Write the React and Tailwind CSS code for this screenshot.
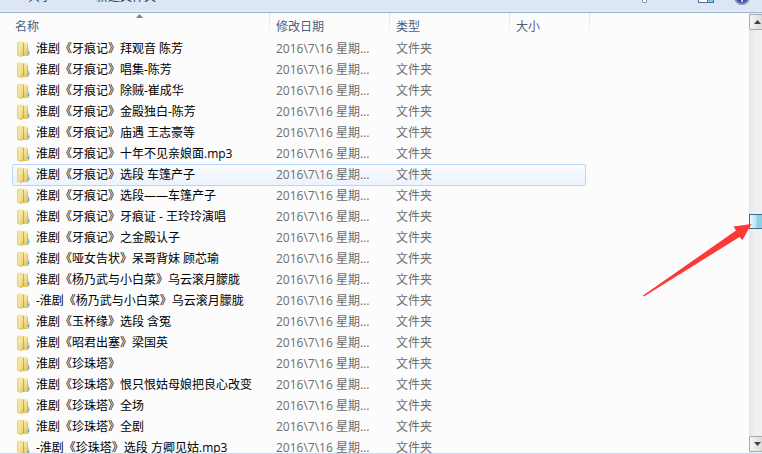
import React from 'react';

const files = [
  '淮剧《牙痕记》拜观音 陈芳',
  '淮剧《牙痕记》唱集-陈芳',
  '淮剧《牙痕记》除贼-崔成华',
  '淮剧《牙痕记》金殿独白-陈芳',
  '淮剧《牙痕记》庙遇 王志豪等',
  '淮剧《牙痕记》十年不见亲娘面.mp3',
  '淮剧《牙痕记》选段 车篷产子',
  '淮剧《牙痕记》选段——车篷产子',
  '淮剧《牙痕记》牙痕证 - 王玲玲演唱',
  '淮剧《牙痕记》之金殿认子',
  '淮剧《哑女告状》呆哥背妹 顾芯瑜',
  '淮剧《杨乃武与小白菜》乌云滚月朦胧',
  '-淮剧《杨乃武与小白菜》乌云滚月朦胧',
  '淮剧《玉杯缘》选段 含冤',
  '淮剧《昭君出塞》梁国英',
  '淮剧《珍珠塔》',
  '淮剧《珍珠塔》恨只恨姑母娘把良心改变',
  '淮剧《珍珠塔》全场',
  '淮剧《珍珠塔》全剧',
  '-淮剧《珍珠塔》选段 方卿见姑.mp3',
];

const columns = ['名称', '修改日期', '类型', '大小'];
const scrollPos = 0.453;

function FolderIcon() {
  return (
    <svg className="h-4 w-4 shrink-0" viewBox="0 0 16 16" aria-hidden="true">
      <defs>
        <linearGradient id="folderFront" x1="0" x2="1" y1="0" y2="1">
          <stop offset="0" stopColor="#f6eaa8" />
          <stop offset="0.6" stopColor="#f3e193" />
          <stop offset="1" stopColor="#dfc055" />
        </linearGradient>
        <linearGradient id="folderBack" x1="0" x2="0" y1="0" y2="1">
          <stop offset="0" stopColor="#f7ecb4" />
          <stop offset="1" stopColor="#e3c660" />
        </linearGradient>
      </defs>
      <path d="M6 1h6l1 1v5l1 1v6l-1 1H6z" fill="url(#folderBack)" />
      <path d="M12.500 3v11.500" stroke="#d9bf62" />
      <path d="M13 9.500h1.500v4H13z" fill="#9ad0ee" />
      <path d="M13 11h1v2h-1z" fill="#4a9fd6" />
      <path d="M6.500 1 9 2v12.500L6.500 15.500z" fill="#cfae48" />
      <path d="M2 1.500 3 0.500h3.500L8 2v12l-1.500 2L2 14.500z" fill="url(#folderFront)" />
      <path d="M2.500 1.500v13l4 1" fill="none" stroke="#e0c668" strokeWidth="0.700" />
    </svg>
  );
}

function ScrollButton({ label, down }) {
  return (
    <button aria-label={label} className="flex h-4 w-[17px] shrink-0 items-center justify-center rounded-xs border border-[#a9a9a9] bg-linear-to-r from-[#f6f6f6] to-[#d4d4d4]">
      <svg className="h-1 w-[7px]" viewBox="0 0 7 4" aria-hidden="true">
        <path d={down ? 'M0 0h7L3.500 4z' : 'M0 4h7L3.500 0z'} fill="#404040" />
      </svg>
    </button>
  );
}

function Toolbar() {
  return (
    <header className="flex h-[13px] shrink-0 items-end overflow-hidden border-b border-[#9fb0cd] bg-linear-to-b from-[#dce6f4] from-80% to-[#e6eef9]">
      <div className="flex h-[30px] w-full items-center pr-3 pl-7 text-[#1e395b]">
        <button>共享</button>
        <button className="ml-11">新建文件夹</button>
        <div className="ml-auto flex items-center">
          <button aria-label="更改视图" className="mr-[51px]">
            <svg className="h-3 w-[5px]" viewBox="0 0 5 12" aria-hidden="true">
              <rect x="0.500" y="7" width="4" height="4.500" rx="1" fill="#fff" stroke="#7a8594" />
            </svg>
          </button>
          <button aria-label="预览窗格" className="mr-5">
            <svg className="h-3 w-4" viewBox="0 0 16 12" aria-hidden="true">
              <rect x="0.500" y="0.500" width="15" height="11" fill="#fff" stroke="#4f6f9c" />
              <path d="M10 1h5v10h-5z" fill="#7cc8e4" />
              <path d="M9.500 1v10" stroke="#4f6f9c" />
            </svg>
          </button>
          <button aria-label="帮助">
            <svg className="h-4 w-4" viewBox="0 0 16 16" aria-hidden="true">
              <circle cx="8" cy="8" r="7" fill="#2c4fb8" stroke="#8b93a3" strokeWidth="2" />
              <path d="M6 6q0-2 2-2t2 2q0 1-2 3M8 11v2" fill="none" stroke="#fff" strokeWidth="1.500" />
            </svg>
          </button>
        </div>
      </div>
    </header>
  );
}

export default function App() {
  const [selected, setSelected] = React.useState(6);

  return (
    <div className="flex h-screen flex-col overflow-hidden bg-[#fcfcfc] font-['Open_Sans','Noto_Sans_CJK_SC',sans-serif] text-[12px] leading-4">
      <Toolbar />
      <div className="relative flex min-h-0 flex-1 border-b border-[#cdd7e8]">
        <main className="min-w-0 flex-1 overflow-hidden pl-3">
          <table className="w-[578px] table-fixed border-separate border-spacing-0 text-left whitespace-nowrap">
            <colgroup>
              <col className="w-[258px]" />
              <col className="w-[120px]" />
              <col className="w-[120px]" />
              <col className="w-20" />
            </colgroup>
            <thead>
              <tr className="h-[25px]">
                {columns.map((c, i) => (
                  <th key={c} scope="col" className="relative p-0 font-normal text-[#4c607a]">
                    <button className={i === 0 ? 'block pt-0.5 pl-[3px]' : 'block pt-0.5 pl-1.5'}>{c}</button>
                    <span className="absolute top-0 right-0 h-6 w-px bg-linear-to-b from-[#dbe5f1] to-[#f5f8fc]" />
                    {i === 0 && (
                      <svg className="absolute top-px right-[127px] h-1 w-[7px]" viewBox="0 0 7 4" aria-hidden="true">
                        <path d="M0 4h7L3.500 0z" fill="#5b8cab" />
                      </svg>
                    )}
                  </th>
                ))}
              </tr>
            </thead>
            <tbody>
              {files.map((name, i) => (
                <tr
                  key={name}
                  onClick={() => setSelected(i)}
                  className={
                    i === selected
                      ? "relative isolate h-[21px] after:absolute after:inset-0 after:right-1 after:-bottom-px after:-z-10 after:rounded-xs after:border after:border-[#b8d6fb] after:bg-linear-to-b after:from-[#fafbfd] after:to-[#ebf3fd] after:content-['']"
                      : 'h-[21px]'
                  }
                >
                  <td className="p-0 pl-[3px]">
                    <div className="flex items-center gap-[5px] text-black">
                      <FolderIcon />
                      <span>{name}</span>
                    </div>
                  </td>
                  <td className="p-0 pl-1.5 text-[#6d6d6d]">2016\7\16 星期...</td>
                  <td className="p-0 pl-1.5 text-[#6d6d6d]">文件夹</td>
                  <td className="p-0" />
                </tr>
              ))}
            </tbody>
          </table>
        </main>

        <aside className="flex w-[13px] shrink-0 flex-col overflow-hidden bg-linear-to-r from-[#e3e3e3] to-[#f0f0f0] to-40% py-px">
          <ScrollButton label="向上滚动" />
          <div className="relative w-[17px] flex-1">
            <div
              className="absolute left-0 h-[15px] w-[17px] border border-[#3c6c92] bg-linear-to-r from-[#e2f4fc] from-10% via-[#b9e2f3] via-40% to-[#8fcde8] to-50%"
              style={{ top: `${scrollPos * 100}%` }}
            />
          </div>
          <ScrollButton label="向下滚动" down />
        </aside>

        {/* Arrow pointing at the scroll thumb */}
        <svg className="pointer-events-none absolute top-[211px] right-2.5 h-[73px] w-[109px]" viewBox="0 0 109 73" aria-hidden="true">
          <path d="M0 71.500 93 6.500 90.500 2.500 108.500 0 99.500 16 96.500 13 1 72.500z" fill="#fb3a37" />
        </svg>
      </div>
    </div>
  );
}
